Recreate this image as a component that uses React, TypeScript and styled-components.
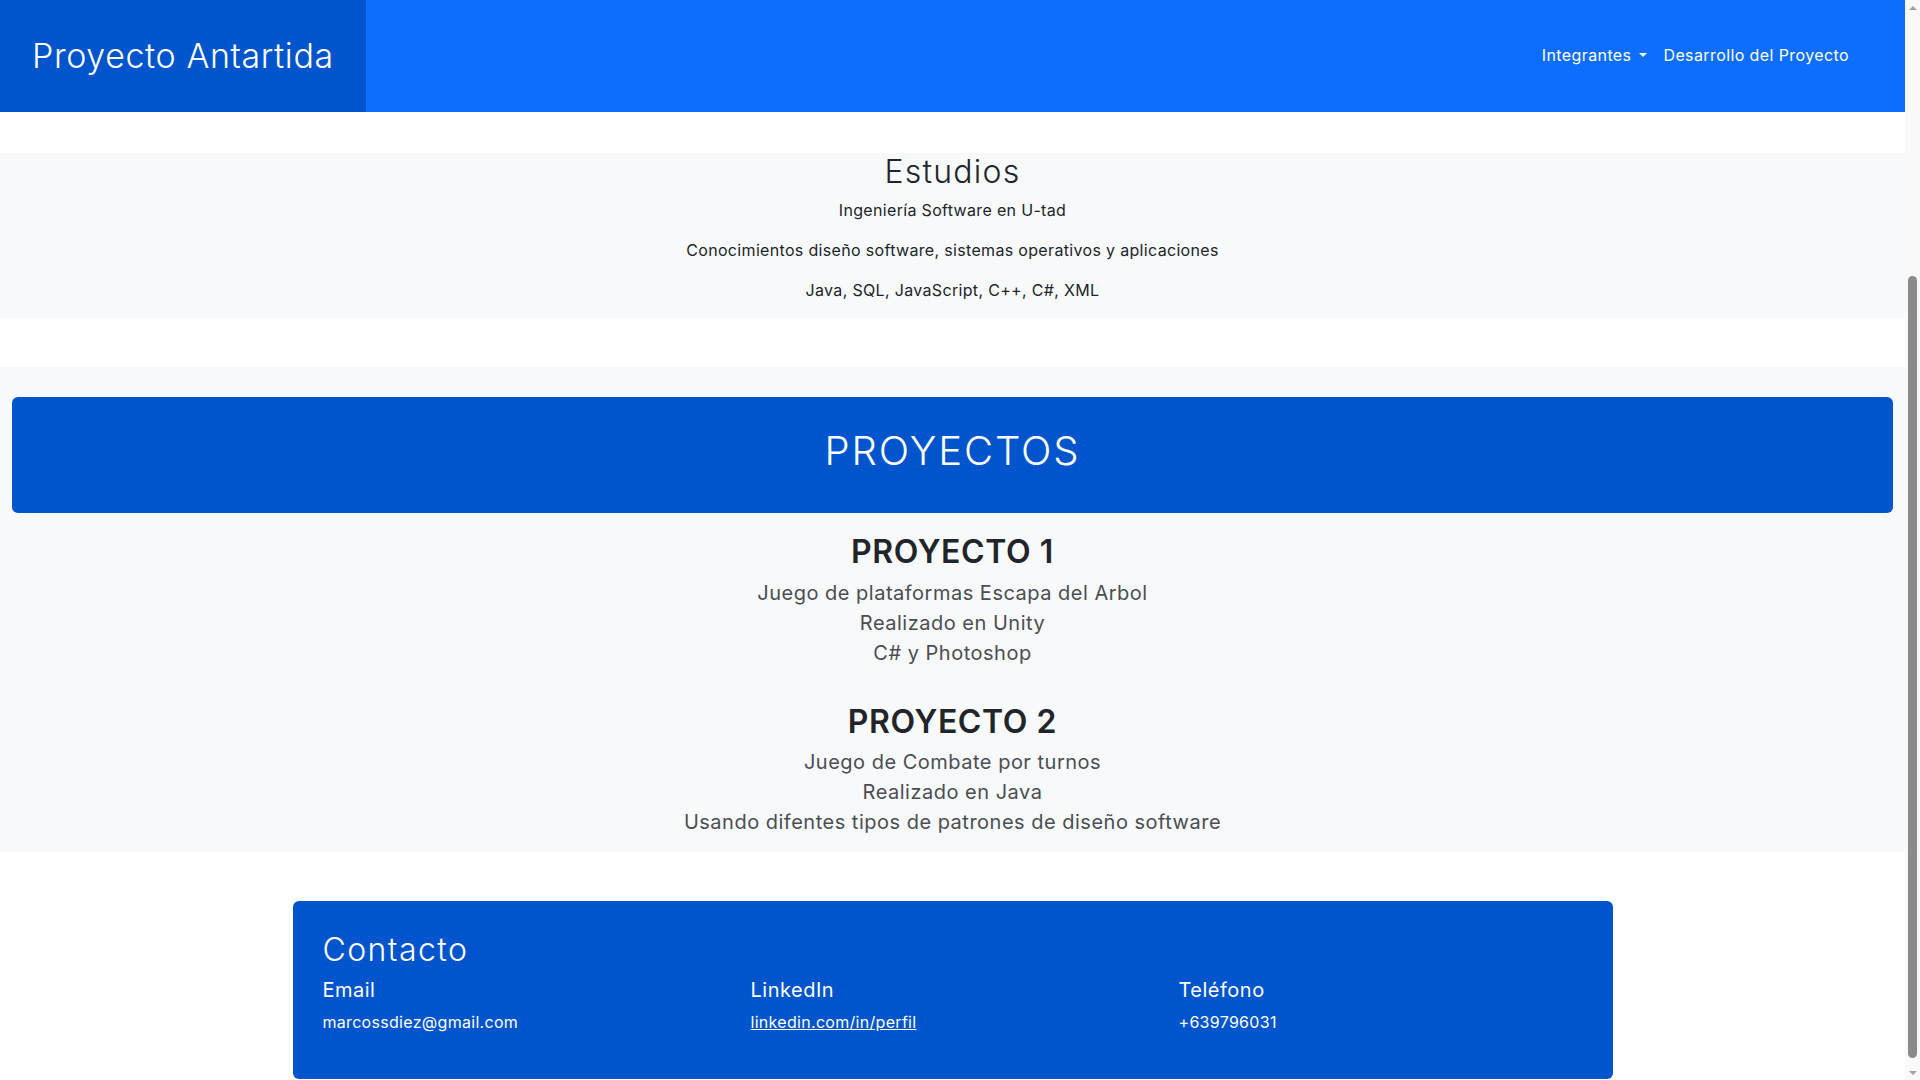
import React from 'react';
import styled, { createGlobalStyle, css } from 'styled-components';

const GlobalStyle = createGlobalStyle`
  html, body { height: 100%; }
  body {
    margin: 0;
    overflow: hidden;
    font-family: Inter, "Noto Sans", sans-serif;
    color: #212529;
    background: #ffffff;
  }
  *, *::before, *::after { box-sizing: border-box; }
`;

const Shell = styled.div`
  display: flex;
  height: 1080px;
`;

const Page = styled.div`
  flex: 1;
  min-width: 0;
`;

/* window scrollbar as seen in the screenshot */
const ScrollBar = styled.aside`
  width: 15px;
  flex-shrink: 0;
  display: flex;
  flex-direction: column;
  align-items: center;
  background: #f9f9f9;
`;

const Arrow = styled.div<{ $down?: boolean }>`
  height: 15px;
  width: 100%;
  display: flex;
  align-items: center;
  justify-content: center;
  &::before {
    content: "";
    border-left: 4px solid transparent;
    border-right: 4px solid transparent;
    ${(p) =>
      p.$down
        ? css`border-top: 4px solid #a3a3a3;`
        : css`border-bottom: 4px solid #a3a3a3;`}
  }
`;

const Track = styled.div`
  flex: 1;
  width: 100%;
  display: flex;
  justify-content: center;
`;

const Thumb = styled.div<{ $offset: number; $length: number }>`
  width: 9px;
  margin-top: ${(p) => p.$offset}px;
  height: ${(p) => p.$length}px;
  border-radius: 5px;
  background: #8a8a8a;
`;

const Navbar = styled.nav`
  height: 112px;
  display: flex;
  align-items: center;
  padding-bottom: 2px;
  background: #0d6efd;
`;

const Brand = styled.a`
  flex-shrink: 0;
  align-self: stretch;
  width: 366px;
  margin-bottom: -2px;
  display: flex;
  align-items: center;
  padding: 0 0 2px 32px;
  background: #0055cc;
  color: #ffffff;
  font-size: 34px;
  font-weight: 300;
  letter-spacing: 0.6px;
  text-decoration: none;
`;

const NavLinks = styled.ul`
  display: flex;
  align-items: center;
  list-style: none;
  margin: 0 0 0 auto;
  padding: 0 48px 0 0;
`;

const NavLink = styled.a<{ $dropdown?: boolean }>`
  display: block;
  padding: 8px;
  color: #ffffff;
  font-size: 16px;
  letter-spacing: 0.4px;
  text-decoration: none;
  ${(p) =>
    p.$dropdown &&
    css`
      &::after {
        content: "";
        display: inline-block;
        margin-left: 0.5em;
        vertical-align: 0.255em;
        border-top: 0.3em solid;
        border-right: 0.3em solid transparent;
        border-left: 0.3em solid transparent;
      }
    `}
`;

const StudiesSection = styled.section`
  display: flow-root;
  margin-top: 41px;
  padding: 0 12px;
  background: #f8f9fa;
  text-align: center;
`;

const SectionTitle = styled.h2`
  margin: 0 0 7px;
  font-size: 32px;
  font-weight: 300;
  line-height: 1.2;
  letter-spacing: 1.2px;
`;

const StudyLine = styled.p`
  margin: 0 0 16px;
  font-size: 16px;
  line-height: 1.5;
  letter-spacing: 0.33px;
`;

const ProjectsSection = styled.section`
  display: flow-root;
  margin-top: 49px;
  padding: 30px 12px 15px;
  background: #f8f9fa;
  text-align: center;
`;

const Banner = styled.div`
  padding: 30px 0 38px;
  border-radius: 6px;
  background: #0055cc;
`;

const BannerTitle = styled.h1`
  margin: 0;
  color: #ffffff;
  font-size: 40px;
  font-weight: 300;
  line-height: 1.2;
  letter-spacing: 1.9px;
`;

const ProjectList = styled.div`
  display: flex;
  flex-direction: column;
  gap: 35px;
  padding-top: 20px;
`;

const ProjectTitle = styled.h3`
  margin: 0 0 6px;
  font-size: 32px;
  font-weight: 600;
  line-height: 1.2;
  letter-spacing: 0.6px;
  color: #212529;
`;

const ProjectLine = styled.p`
  margin: 0;
  font-size: 20px;
  line-height: 1.5;
  letter-spacing: 0.5px;
  color: #4a4e53;
`;

const ContactCard = styled.footer`
  width: 1320px;
  margin: 49px auto 0;
  padding: 30px 18px 29px;
  border-radius: 6px;
  background: #0055cc;
  color: #ffffff;
`;

const ContactTitle = styled.h2`
  margin: 0 0 8px;
  padding: 0 12px;
  font-size: 32px;
  font-weight: 300;
  line-height: 1.2;
  letter-spacing: 1.4px;
`;

const ContactGrid = styled.div`
  display: grid;
  grid-template-columns: repeat(3, 1fr);
`;

const ContactCol = styled.div`
  padding: 0 12px;
`;

const ContactLabel = styled.h5`
  margin: 0 0 8px;
  font-size: 20px;
  font-weight: 400;
  line-height: 1.2;
  letter-spacing: 0.5px;
`;

const ContactValue = styled.p`
  margin: 0 0 16px;
  font-size: 16px;
  line-height: 1.5;
  letter-spacing: 0.3px;
`;

const ContactLink = styled.a`
  color: #ffffff;
  text-decoration: underline;
`;

const projects = [
  {
    title: 'PROYECTO 1',
    lines: ['Juego de plataformas Escapa del Arbol', 'Realizado en Unity', 'C# y Photoshop'],
  },
  {
    title: 'PROYECTO 2',
    lines: [
      'Juego de Combate por turnos',
      'Realizado en Java',
      'Usando difentes tipos de patrones de diseño software',
    ],
  },
];

export default function App() {
  return (
    <>
      <GlobalStyle />
      <Shell>
        <Page>
          <Navbar>
            <Brand href="#">Proyecto Antartida</Brand>
            <NavLinks>
              <li>
                <NavLink href="#" $dropdown>
                  Integrantes
                </NavLink>
              </li>
              <li>
                <NavLink href="#">Desarrollo del Proyecto</NavLink>
              </li>
            </NavLinks>
          </Navbar>
          <StudiesSection>
            <SectionTitle>Estudios</SectionTitle>
            <StudyLine>Ingeniería Software en U-tad</StudyLine>
            <StudyLine>Conocimientos diseño software, sistemas operativos y aplicaciones</StudyLine>
            <StudyLine>Java, SQL, JavaScript, C++, C#, XML</StudyLine>
          </StudiesSection>
          <ProjectsSection>
            <Banner>
              <BannerTitle>PROYECTOS</BannerTitle>
            </Banner>
            <ProjectList>
              {projects.map((p) => (
                <div key={p.title}>
                  <ProjectTitle>{p.title}</ProjectTitle>
                  {p.lines.map((l) => (
                    <ProjectLine key={l}>{l}</ProjectLine>
                  ))}
                </div>
              ))}
            </ProjectList>
          </ProjectsSection>
          <ContactCard>
            <ContactTitle>Contacto</ContactTitle>
            <ContactGrid>
              <ContactCol>
                <ContactLabel>Email</ContactLabel>
                <ContactValue>marcossdiez@gmail.com</ContactValue>
              </ContactCol>
              <ContactCol>
                <ContactLabel>LinkedIn</ContactLabel>
                <ContactValue>
                  <ContactLink href="#">linkedin.com/in/perfil</ContactLink>
                </ContactValue>
              </ContactCol>
              <ContactCol>
                <ContactLabel>Teléfono</ContactLabel>
                <ContactValue>+639796031</ContactValue>
              </ContactCol>
            </ContactGrid>
          </ContactCard>
        </Page>
        <ScrollBar aria-hidden>
          <Arrow />
          <Track>
            <Thumb $offset={261} $length={782} />
          </Track>
          <Arrow $down />
        </ScrollBar>
      </Shell>
    </>
  );
}
